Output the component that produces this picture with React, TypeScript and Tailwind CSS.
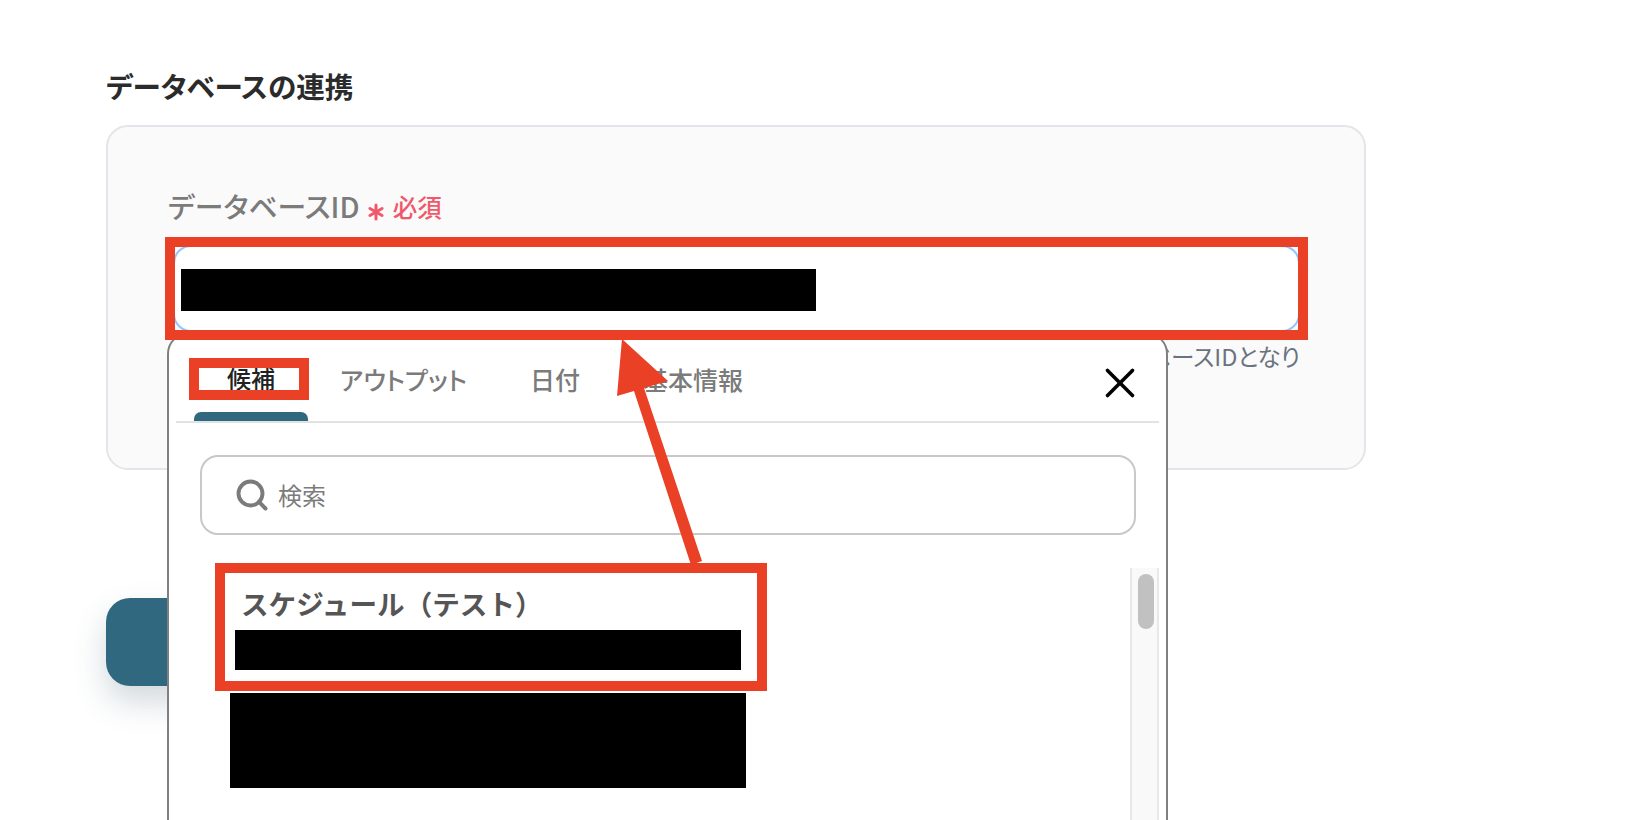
import { Asterisk, Search, X } from "lucide-react";

const font = { fontFamily: '"Noto Sans CJK JP", "Noto Sans", sans-serif' };

export default function App() {
  return (
    <div style={font} className="relative h-[820px] w-[1634px] overflow-hidden bg-white [font-feature-settings:'palt']">
      {/* Page */}
      <div className="pl-[106px] pr-[268px] pt-[67px]">
        <h2 className="text-[28.6px] leading-[38px] font-semibold text-[#2b2b2b]">データベースの連携</h2>
        <div className="mt-[20px] h-[345px] rounded-[22px] border-2 border-[#e2e6ea] bg-[#fafafa] pl-[60px] pr-[53px] pt-[62px]">
          <div className="flex h-[34px] items-center">
            <span className="text-[28.8px] leading-[34px] font-medium text-[#7b7b7b]">データベースID</span>
            <Asterisk className="ml-[2px] mt-[12px] h-[28px] w-[28px] text-[#f0596a]" strokeWidth={2.6} />
            <span className="ml-[3px] mt-[2px] text-[24.5px] leading-[34px] font-medium text-[#f0596a]">必須</span>
          </div>
          <div className="ml-[5px] mr-[11px] mt-[22px] h-[87px] rounded-[18px] border-2 border-[#93c5fd] bg-white" />
          <p className="mr-[11px] mt-[9px] text-right text-[23.5px] leading-[30px] text-[#6b7280]">データベースIDとなり</p>
        </div>
        <div className="mt-[128px] h-[88px] w-[300px] rounded-[24px] bg-[#30697f] shadow-[0_16px_32px_rgba(48,80,100,0.22)]" />
      </div>

      {/* Popup */}
      <div className="absolute left-[167px] top-[332px] flex h-[520px] w-[1001px] flex-col rounded-[22px] border-2 border-[#808080] bg-white">
        <div className="flex h-[87px] items-end">
          <div className="ml-[25px] flex h-[79px] w-[114px] flex-col items-center justify-between">
            <span className="mt-[20px] text-[24px] leading-[32px] font-medium text-[#222]">候補</span>
            <span className="h-[9px] w-full rounded-t-[7px] bg-[#30697f]" />
          </div>
          <span className="mb-[26px] ml-[32px] w-[126px] text-[25px] leading-[32px] font-medium whitespace-nowrap text-[#7b7b7b]">アウトプット</span>
          <span className="mb-[26px] ml-[64px] w-[50px] text-[25px] leading-[32px] font-medium whitespace-nowrap text-[#7b7b7b]">日付</span>
          <span className="mb-[26px] ml-[63px] text-[25px] leading-[32px] font-medium whitespace-nowrap text-[#7b7b7b]">基本情報</span>
          <X className="mb-[13px] ml-auto mr-[21px] h-[50px] w-[50px] text-black" strokeWidth={1.7} />
        </div>
        <div className="mx-[7px] h-[2px] bg-[#e2e2e2]" />
        <div className="ml-[31px] mr-[30px] mt-[32px] flex h-[80px] items-center rounded-[18px] border-2 border-[#c8c8c8] pl-[32px]">
          <Search className="h-[36px] w-[36px] text-[#7b7b7b]" strokeWidth={2.6} />
          <span className="ml-[8px] text-[24px] leading-[32px] text-[#7b7b7b]">検索</span>
        </div>
        <div className="mt-[33px] flex flex-1 items-start">
          <div className="flex-1 pl-[72px]">
            <div className="mt-[17px] text-[27.6px] leading-[36px] font-semibold text-[#555] [font-feature-settings:normal]">
              スケジュール（テスト）
            </div>
          </div>
          <div className="mr-[7px] h-full w-[29px] border-x-2 border-[#e8e8e8] bg-[#f9f9f9] pl-[6px] pt-[6px]">
            <div className="h-[55px] w-[16px] rounded-full bg-[#c1c1c1]" />
          </div>
        </div>
      </div>

      {/* Redactions */}
      <div className="absolute left-[181px] top-[269px] h-[42px] w-[635px] bg-black" />
      <div className="absolute left-[235px] top-[630px] h-[40px] w-[506px] bg-black" />
      <div className="absolute left-[230px] top-[693px] h-[95px] w-[516px] bg-black" />

      {/* Annotations */}
      <div className="absolute left-[165px] top-[237px] h-[103px] w-[1143px] border-[10px] border-[#ea4025]" />
      <div className="absolute left-[189px] top-[358px] h-[42px] w-[120px] border-[10px] border-[#ea4025]" />
      <div className="absolute left-[215px] top-[563px] h-[128px] w-[552px] border-[10px] border-[#ea4025]" />
      <svg className="absolute left-0 top-0" width="1634" height="820">
        <polygon fill="#ea4025" points="622,339 668,381 644,388 702,561 691,565 634,391 617,396" />
      </svg>
    </div>
  );
}
